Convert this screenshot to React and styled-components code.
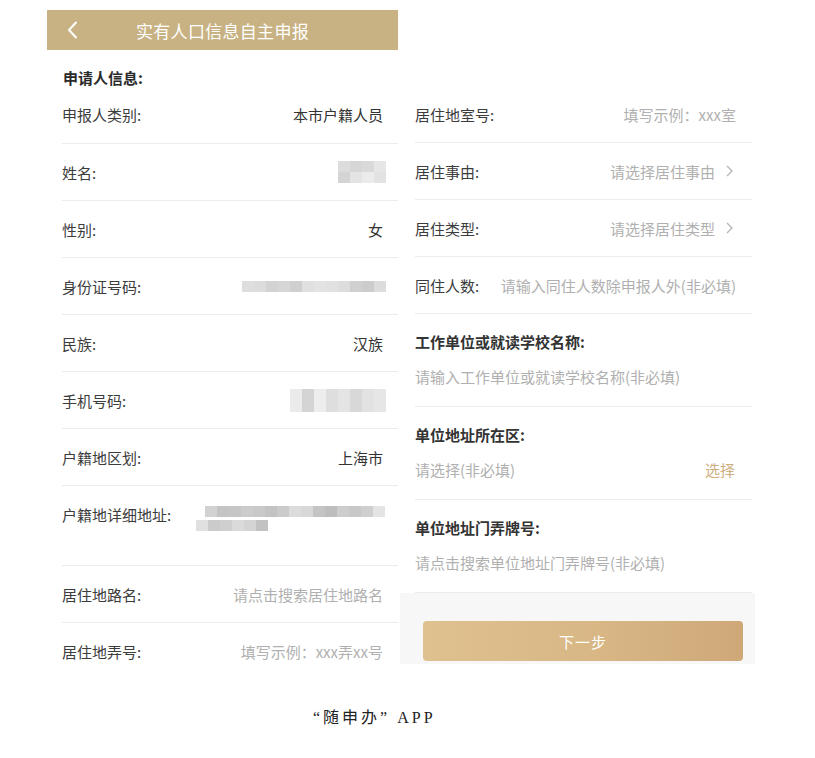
import React from 'react';
import styled, { createGlobalStyle } from 'styled-components';

const GlobalStyle = createGlobalStyle`
  body {
    margin: 0;
    background: #ffffff;
    font-family: "Noto Sans CJK SC", "Noto Sans", sans-serif;
    color: #333333;
  }
`;

const Page = styled.div`
  width: 815px;
  height: 758px;
  box-sizing: border-box;
  padding: 10px 0 0 47px;
  display: flex;
  flex-direction: column;
`;

const Columns = styled.div`
  display: flex;
  gap: 2px;
  align-items: flex-start;
`;

const LeftColumn = styled.div`
  width: 351px;
  display: flex;
  flex-direction: column;
`;

const RightColumn = styled.div`
  width: 355px;
  padding-top: 76px;
  display: flex;
  flex-direction: column;
`;

const Header = styled.div`
  height: 40px;
  background: #c8b283;
  display: grid;
  grid-template-columns: 1fr auto 1fr;
  align-items: center;
  color: #ffffff;
`;

const Back = styled.div`
  padding-left: 20px;
  display: flex;
  align-items: center;
`;

const Title = styled.div`
  font-size: 17px;
  letter-spacing: 0.3px;
`;

const SectionTitle = styled.div`
  margin: 20px 0 0 16px;
  height: 16px;
  line-height: 16px;
  font-size: 15px;
  font-weight: 700;
  color: #2a2a2a;
`;

const Row = styled.div`
  height: ${(p) => p.$h || 56}px;
  margin-left: 15px;
  margin-right: ${(p) => p.$mr || 0}px;
  padding-right: ${(p) => p.$pr || 15}px;
  border-bottom: ${(p) => (p.$last ? 'none' : '1px solid #ececec')};
  display: flex;
  align-items: ${(p) => (p.$top ? 'flex-start' : 'center')};
  justify-content: space-between;
  padding-top: ${(p) => (p.$top ? 18 : 0)}px;
  box-sizing: content-box;
`;

const AddressRow = styled(Row)`
  height: 61px;
`;

const Label = styled.span`
  font-size: 15px;
  color: ${(p) => (p.$bold ? '#333333' : '#3c3c3c')};
  font-weight: ${(p) => (p.$bold ? 700 : 400)};
  white-space: nowrap;
`;

const Value = styled.span`
  font-size: 15px;
  color: ${(p) => (p.$muted ? '#b0b0b0' : '#333333')};
  white-space: nowrap;
  display: flex;
  align-items: center;
  gap: 11px;
`;

const Block = styled.div`
  height: 93px;
  margin: 0 3px 0 15px;
  border-bottom: 1px solid #ececec;
  display: flex;
  flex-direction: column;
  padding-top: 17px;
  box-sizing: border-box;
  gap: 12px;
`;

const BlockLine = styled.div`
  display: flex;
  justify-content: space-between;
  padding-right: 17px;
  height: 24px;
  align-items: center;
`;

const Pick = styled.span`
  font-size: 15px;
  color: #cdae7e;
`;

const Footer = styled.div`
  height: 71px;
  background: #f7f7f7;
  padding: 28px 12px 0 23px;
  box-sizing: border-box;
`;

const NextButton = styled.button`
  width: 100%;
  height: 40px;
  border: none;
  border-radius: 4px;
  background: linear-gradient(90deg, #dfc08f 0%, #d8b785 55%, #cfa878 100%);
  color: #ffffff;
  font-family: inherit;
  font-size: 15px;
  letter-spacing: 1px;
`;

const Caption = styled.div`
  margin: 29px 0 0 266px;
  line-height: 20px;
  font-family: "Liberation Serif", "Noto Sans CJK SC", serif;
  font-size: 16px;
  letter-spacing: 3px;
  color: #222222;
`;

const Mosaic = styled.div`
  display: grid;
  grid-template-columns: repeat(${(p) => p.$cols}, ${(p) => p.$cw}px);
  grid-auto-rows: ${(p) => p.$ch}px;
  filter: blur(0.7px);
  margin-left: ${(p) => p.$ml || 0}px;
  margin-right: ${(p) => p.$mr || 0}px;
`;

const Cell = styled.span`
  background: ${(p) => p.$c};
`;

const MosaicStack = styled.div`
  display: flex;
  flex-direction: column;
  gap: 3px;
  margin-top: 2px;
`;

const Blur = ({ shades, cols, cw, ch, ml, mr }) => (
  <Mosaic $cols={cols} $cw={cw} $ch={ch} $ml={ml} $mr={mr}>
    {shades.split(' ').map((c, i) => (
      <Cell key={i} $c={`#${c}`} />
    ))}
  </Mosaic>
);

const Chevron = () => (
  <svg width="7" height="12" viewBox="0 0 7 12">
    <path d="M1 1 L6 6 L1 11" fill="none" stroke="#b5b5b5" strokeWidth="1.3" />
  </svg>
);

const BackIcon = () => (
  <svg width="11" height="18" viewBox="0 0 11 18">
    <path d="M9 1.5 L2 9 L9 16.5" fill="none" stroke="#ffffff" strokeWidth="2" strokeLinecap="round" />
  </svg>
);

const App = () => (
  <>
    <GlobalStyle />
    <Page>
      <Columns>
        <LeftColumn>
          <Header>
            <Back><BackIcon /></Back>
            <Title>实有人口信息自主申报</Title>
            <span />
          </Header>
          <SectionTitle>申请人信息:</SectionTitle>
          <Row $h={57}>
            <Label>申报人类别:</Label>
            <Value>本市户籍人员</Value>
          </Row>
          <Row>
            <Label>姓名:</Label>
            <Blur cols={4} cw={12} ch={11} mr={-3} shades="dcdcdc d6d6d6 d9d9d9 e6e6e6 d4d4d4 e4e4e4 ebebeb e2e2e2" />
          </Row>
          <Row>
            <Label>性别:</Label>
            <Value>女</Value>
          </Row>
          <Row>
            <Label>身份证号码:</Label>
            <Blur cols={12} cw={12} ch={11} mr={-3} shades="dedede dcdcdc d3d3d3 d6d6d6 cfcfcf e0e0e0 e3e3e3 e1e1e1 dddddd d0d0d0 cccccc dcdcdc" />
          </Row>
          <Row>
            <Label>民族:</Label>
            <Value>汉族</Value>
          </Row>
          <Row>
            <Label>手机号码:</Label>
            <Blur cols={8} cw={12} ch={23} mr={-3} shades="ebebeb d4d4d4 ededed dedede e4e4e4 d8d8d8 e2e2e2 e6e6e6" />
          </Row>
          <Row>
            <Label>户籍地区划:</Label>
            <Value>上海市</Value>
          </Row>
          <AddressRow $top>
            <Label>户籍地详细地址:</Label>
            <MosaicStack>
              <Blur cols={15} cw={12} ch={11} mr={-2} shades="d2d2d2 c4c4c4 c6c6c6 cccccc c9c9c9 c3c3c3 cbcbcb dcdcdc d8d8d8 c4c4c4 bdbdbd cdcdcd c8c8c8 cfcfcf e4e4e4" />
              <Blur cols={6} cw={12} ch={11} ml={-9} shades="e0e0e0 cbcbcb cfcfcf dadada d4d4d4 c2c2c2" />
            </MosaicStack>
          </AddressRow>
          <Row>
            <Label>居住地路名:</Label>
            <Value $muted>请点击搜索居住地路名</Value>
          </Row>
          <Row $last>
            <Label>居住地弄号:</Label>
            <Value $muted>填写示例：xxx弄xx号</Value>
          </Row>
        </LeftColumn>

        <RightColumn>
          <Row $h={56} $mr={3} $pr={16}>
            <Label>居住地室号:</Label>
            <Value $muted>填写示例：xxx室</Value>
          </Row>
          <Row $mr={3} $pr={19}>
            <Label>居住事由:</Label>
            <Value $muted>请选择居住事由<Chevron /></Value>
          </Row>
          <Row $mr={3} $pr={19}>
            <Label>居住类型:</Label>
            <Value $muted>请选择居住类型<Chevron /></Value>
          </Row>
          <Row $mr={3} $pr={16}>
            <Label>同住人数:</Label>
            <Value $muted>请输入同住人数除申报人外(非必填)</Value>
          </Row>
          <Block>
            <Label $bold>工作单位或就读学校名称:</Label>
            <BlockLine>
              <Value $muted>请输入工作单位或就读学校名称(非必填)</Value>
            </BlockLine>
          </Block>
          <Block>
            <Label $bold>单位地址所在区:</Label>
            <BlockLine>
              <Value $muted>请选择(非必填)</Value>
              <Pick>选择</Pick>
            </BlockLine>
          </Block>
          <Block>
            <Label $bold>单位地址门弄牌号:</Label>
            <BlockLine>
              <Value $muted>请点击搜索单位地址门弄牌号(非必填)</Value>
            </BlockLine>
          </Block>
          <Footer>
            <NextButton>下一步</NextButton>
          </Footer>
        </RightColumn>
      </Columns>
      <Caption>“随申办” APP</Caption>
    </Page>
  </>
);

export default App;
